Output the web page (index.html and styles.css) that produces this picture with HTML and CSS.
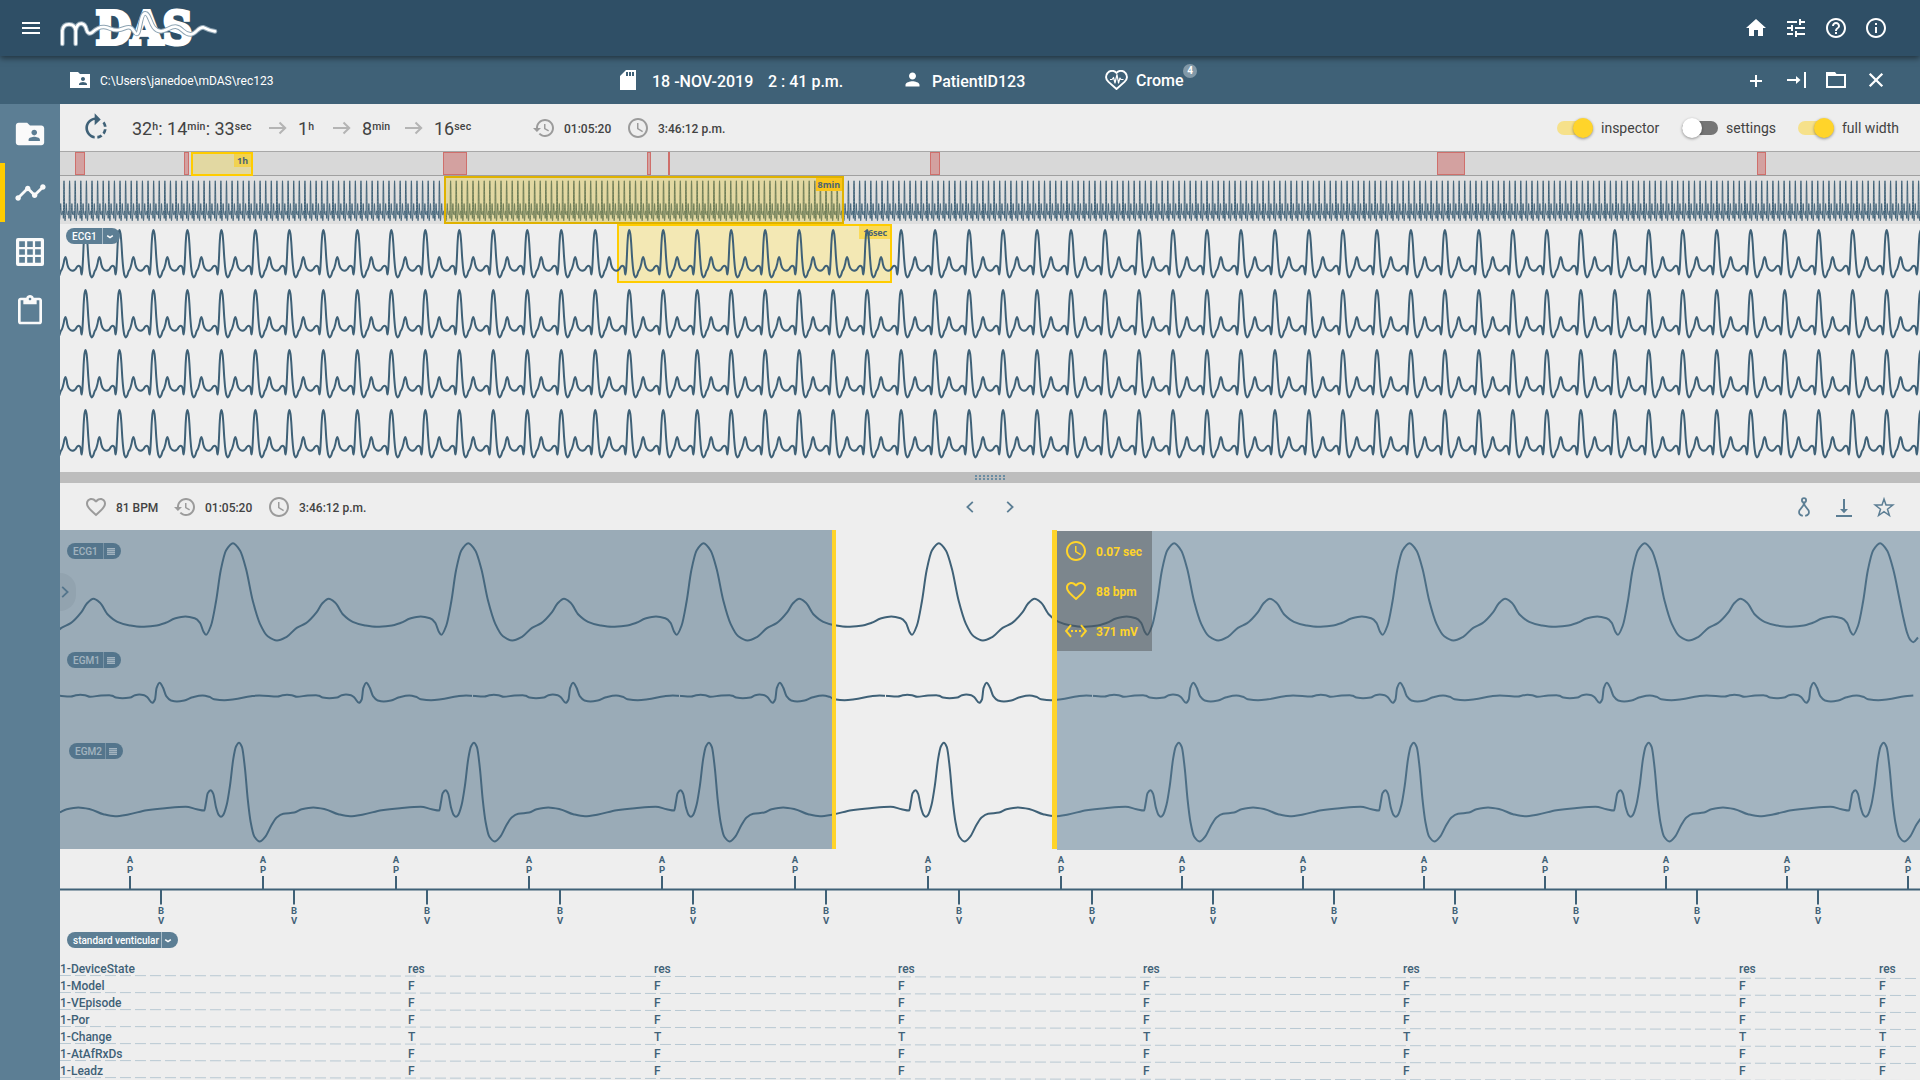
FILE: index.html
```html
<!DOCTYPE html>
<html lang="en">
<head>
<meta charset="utf-8">
<title>mDAS</title>
<link rel="stylesheet" href="styles.css">
</head>
<body>
<svg class="defs" width="0" height="0" aria-hidden="true">
  <symbol id="history" viewBox="0 0 24 24"><path d="M13 3c-4.97 0-9 4.03-9 9H1l3.89 3.89.07.14L9 12H6c0-3.87 3.13-7 7-7s7 3.13 7 7-3.13 7-7 7c-1.93 0-3.68-.79-4.94-2.06l-1.42 1.42C8.27 19.99 10.51 21 13 21c4.97 0 9-4.03 9-9s-4.03-9-9-9zm-1 5v5l4.28 2.54.72-1.21-3.5-2.08V8H12z"/></symbol>
  <symbol id="clock" viewBox="0 0 24 24"><path d="M11.99 2C6.47 2 2 6.48 2 12s4.47 10 9.99 10C17.52 22 22 17.52 22 12S17.52 2 11.99 2zM12 20c-4.42 0-8-3.58-8-8s3.58-8 8-8 8 3.58 8 8-3.58 8-8 8zm.5-13H11v6l5.25 3.15.75-1.23-4.5-2.67z"/></symbol>
  <symbol id="heart" viewBox="0 0 24 24"><path d="M16.5 3c-1.74 0-3.41.81-4.5 2.09C10.91 3.81 9.24 3 7.5 3 4.42 3 2 5.42 2 8.5c0 3.78 3.4 6.86 8.55 11.54L12 21.35l1.45-1.32C18.6 15.36 22 12.28 22 8.5 22 5.42 19.58 3 16.5 3zm-4.4 15.55l-.1.1-.1-.1C7.14 14.24 4 11.39 4 8.5 4 6.5 5.5 5 7.5 5c1.54 0 3.04.99 3.57 2.36h1.87C13.46 5.99 14.96 5 16.5 5c2 0 3.5 1.5 3.5 3.5 0 2.89-3.14 5.74-7.9 10.05z"/></symbol>
  <symbol id="arrow" viewBox="0 0 18 14"><path d="M0 7h16M10.5 1.5L16.2 7l-5.7 5.5" fill="none" stroke="currentColor" stroke-width="2"/></symbol>
  <symbol id="list" viewBox="0 0 8 7"><path d="M0 .8h8M0 2.6h8M0 4.4h8M0 6.2h8" stroke="currentColor" stroke-width="1.4"/></symbol>
  <symbol id="caret" viewBox="0 0 8 6"><path d="M1.2 1.6L4 3.6l2.8-2" fill="none" stroke="currentColor" stroke-width="1.5"/></symbol>
</svg>

<header class="topbar">
  <svg class="ico menu" viewBox="0 0 24 24"><path d="M3 18h18v-2H3v2zm0-5h18v-2H3v2zm0-7v2h18V6H3z"/></svg>
  <svg class="logo" viewBox="0 0 510 168">
    <text class="logo-word" x="122" y="132" textLength="290" lengthAdjust="spacingAndGlyphs">DAS</text>
    <path class="logo-line" d="M22 132V92Q24 73 42 73T62 92V132M62 92Q66 70 80 71Q91 73 94 88Q99 106 112 97Q130 80 147 81C166 83 170 92 190 90C208 88 218 76 229 84C238 92 240 102 245 102C256 102 255 39 271 40C288 41 284 92 318 94C338 92 345 79 362 80C384 82 384 104 408 103C424 101 430 80 445 82Q462 91 480 94"/>
    <path class="logo-core" d="M22 132V92Q24 73 42 73T62 92V132M62 92Q66 70 80 71Q91 73 94 88Q99 106 112 97Q130 80 147 81C166 83 170 92 190 90C208 88 218 76 229 84C238 92 240 102 245 102C256 102 255 39 271 40C288 41 284 92 318 94C338 92 345 79 362 80C384 82 384 104 408 103C424 101 430 80 445 82Q462 91 480 94"/>
  </svg>
  <nav class="actions">
    <svg class="ico" viewBox="0 0 24 24"><path d="M10 20v-6h4v6h5v-8h3L12 3 2 12h3v8z"/></svg>
    <svg class="ico" viewBox="0 0 24 24"><path d="M3 17v2h6v-2H3zM3 5v2h10V5H3zm10 16v-2h8v-2h-8v-2h-2v6h2zM7 9v2H3v2h4v2h2V9H7zm14 4v-2H11v2h10zm-6-4h2V7h4V5h-4V3h-2v6z"/></svg>
    <svg class="ico" viewBox="0 0 24 24"><path d="M11 18h2v-2h-2v2zm1-16C6.48 2 2 6.48 2 12s4.48 10 10 10 10-4.48 10-10S17.52 2 12 2zm0 18c-4.41 0-8-3.59-8-8s3.59-8 8-8 8 3.59 8 8-3.59 8-8 8zm0-14c-2.21 0-4 1.79-4 4h2c0-1.1.9-2 2-2s2 .9 2 2c0 2-3 1.75-3 5h2c0-2.25 3-2.5 3-5 0-2.21-1.79-4-4-4z"/></svg>
    <svg class="ico" viewBox="0 0 24 24"><path d="M11 17h2v-6h-2v6zm1-15C6.48 2 2 6.48 2 12s4.48 10 10 10 10-4.48 10-10S17.52 2 12 2zm0 18c-4.41 0-8-3.59-8-8s3.59-8 8-8 8 3.59 8 8-3.59 8-8 8zM11 9h2V7h-2v2z"/></svg>
  </nav>
</header>

<div class="subbar">
  <svg class="ico" viewBox="0 0 24 24"><path d="M22 6H12l-2-2H2v16h20V6zm-7 3c1.1 0 2 .9 2 2s-.9 2-2 2-2-.9-2-2 .9-2 2-2zm4 8h-8v-1c0-1.33 2.67-2 4-2s4 .67 4 2v1z"/></svg>
  <span class="path">C:\Users\janedoe\mDAS\rec123</span>
  <svg class="ico card" viewBox="0 0 24 24"><path d="M20 2H10L4 8v14h16V2zm-8 6h-2V4h2v4zm3 0h-2V4h2v4zm3 0h-2V4h2v4z"/></svg>
  <span class="meta date">18 -NOV-2019</span>
  <span class="meta time">2 : 41 p.m.</span>
  <svg class="ico person" viewBox="0 0 24 24"><path d="M12 12c2.21 0 4-1.79 4-4s-1.79-4-4-4-4 1.79-4 4 1.79 4 4 4zm0 2c-2.67 0-8 1.34-8 4v2h16v-2c0-2.66-5.33-4-8-4z"/></svg>
  <span class="meta patient">PatientID123</span>
  <svg class="pulse" viewBox="0 0 23 20"><path d="M11.5 19L3.2 11.600A6 6 0 0 1 2.600 3A5.600 5.600 0 0 1 11.500 3A5.600 5.600 0 0 1 20.400 3A6 6 0 0 1 19.800 11.600Z" stroke-width="1.900"/><path d="M5 9.500h2l1.500-2 1.500 5.500 2-8.500 1.500 8.500 1.500-5 1 1.500h2.500" stroke-width="1.200"/></svg>
  <span class="meta device">Crome<sup class="badge">4</sup></span>
  <nav class="actions">
    <svg class="ico" viewBox="0 0 24 24"><path d="M6 13h12M12 7v12" class="ln"/></svg>
    <svg class="ico" viewBox="0 0 24 24"><path d="M3 12h12M21 4v16" class="ln"/><path d="M12 8l4.500 4-4.500 4z"/></svg>
    <svg class="ico" viewBox="0 0 24 24"><path d="M2 4h9l1.500 2H22v14H2zM4 8v10h16V8z" fill-rule="evenodd"/></svg>
    <svg class="ico" viewBox="0 0 24 24"><path d="M5.700 5.700l12.600 12.600M18.300 5.700L5.700 18.300" class="ln thick"/></svg>
  </nav>
</div>

<div class="shell">
  <aside class="rail">
    <a class="rail-item"><svg class="ico r34" viewBox="0 0 24 24"><path d="M20 6h-8l-2-2H4c-1.100 0-1.990.9-1.990 2L2 18c0 1.100.9 2 2 2h16c1.100 0 2-.9 2-2V8c0-1.100-.9-2-2-2zm-5 3c1.100 0 2 .9 2 2s-.9 2-2 2-2-.9-2-2 .9-2 2-2zm4 8h-8v-1c0-1.330 2.670-2 4-2s4 .67 4 2v1z"/></svg></a>
    <a class="rail-item active"><svg class="ico r33" viewBox="0 0 24 24"><path d="M23 8c0 1.100-.9 2-2 2-.18 0-.35-.02-.51-.07l-3.560 3.550c.05.16.07.34.07.52 0 1.100-.9 2-2 2s-2-.9-2-2c0-.18.02-.36.07-.52l-2.550-2.550c-.16.05-.34.07-.52.07s-.36-.02-.52-.07l-4.550 4.560c.05.16.07.33.07.51 0 1.100-.9 2-2 2s-2-.9-2-2 .9-2 2-2c.18 0 .35.02.51.07l4.560-4.550C8.020 9.360 8 9.180 8 9c0-1.100.9-2 2-2s2 .9 2 2c0 .18-.02.36-.07.52l2.550 2.550c.16-.05.34-.07.52-.07s.36.02.52.07l3.550-3.560C19.020 8.350 19 8.180 19 8c0-1.100.9-2 2-2s2 .9 2 2z"/></svg></a>
    <a class="rail-item"><svg class="ico r28" viewBox="0 0 28 28"><path fill-rule="evenodd" d="M2 0h24a2 2 0 0 1 2 2v24a2 2 0 0 1-2 2H2a2 2 0 0 1-2-2V2a2 2 0 0 1 2-2zM3.200 3.200v5.700h5.700V3.200zM11.200 3.200v5.700h5.600V3.200zM19.100 3.200v5.700h5.700V3.200zM3.200 11.200v5.600h5.700v-5.600zM11.200 11.200v5.600h5.600v-5.600zM19.100 11.200v5.600h5.700v-5.600zM3.200 19.100v5.700h5.700v-5.700zM11.200 19.100v5.700h5.600v-5.700zM19.100 19.100v5.700h5.700v-5.700z"/></svg></a>
    <a class="rail-item"><svg class="ico r32" viewBox="0 0 24 24"><path d="M19 2h-4.180C14.400.84 13.300 0 12 0c-1.300 0-2.400.84-2.820 2H5c-1.100 0-2 .9-2 2v16c0 1.100.9 2 2 2h14c1.100 0 2-.9 2-2V4c0-1.100-.9-2-2-2zm-7 0c.55 0 1 .45 1 1s-.45 1-1 1-1-.45-1-1 .45-1 1-1zm7 18H5V4h2v3h10V4h2v16z"/></svg></a>
  </aside>

  <main class="content">
    <section class="toolbar range">
      <svg class="ico rotate" viewBox="0 0 24 24"><path d="M15.550 5.550L11 1v3.070C7.060 4.560 4 7.920 4 12s3.050 7.440 7 7.930v-2.020c-2.840-.48-5-2.940-5-5.910s2.160-5.430 5-5.910V10l4.550-4.450zM19.930 11c-.17-1.390-.72-2.730-1.620-3.890l-1.420 1.420c.54.75.88 1.600 1.020 2.470h2.020zM13 17.900v2.020c1.390-.17 2.740-.71 3.900-1.610l-1.440-1.440c-.75.54-1.590.89-2.460 1.030zm3.890-2.420l1.420 1.410c.9-1.160 1.450-2.500 1.620-3.890h-2.020c-.14.87-.48 1.720-1.020 2.480z"/></svg>
      <span class="span">32<sup>h</sup>: 14<sup>min</sup>: 33<sup>sec</sup></span>
      <svg class="arrow"><use href="#arrow"/></svg><span class="span">1<sup>h</sup></span>
      <svg class="arrow"><use href="#arrow"/></svg><span class="span">8<sup>min</sup></span>
      <svg class="arrow"><use href="#arrow"/></svg><span class="span">16<sup>sec</sup></span>
      <svg class="ico grey"><use href="#history"/></svg><span class="val">01:05:20</span>
      <svg class="ico grey"><use href="#clock"/></svg><span class="val">3:46:12 p.m.</span>
      <i class="toggle on"></i><span class="tlabel">inspector</span>
      <i class="toggle"></i><span class="tlabel">settings</span>
      <i class="toggle on"></i><span class="tlabel">full width</span>
    </section>

    <section class="overview">
      <i class="event" style="left:15px;width:10px"></i>
      <i class="event" style="left:124px;width:5px"></i>
      <i class="event" style="left:383px;width:24px"></i>
      <i class="event" style="left:587px;width:4px"></i>
      <i class="event" style="left:608px;width:2px"></i>
      <i class="event" style="left:870px;width:10px"></i>
      <i class="event" style="left:1377px;width:28px"></i>
      <i class="event" style="left:1697px;width:9px"></i>
      <div class="window hour"><b>1h</b></div>
    </section>

    <section class="strip">
      <svg class="plot" id="strip" width="1860" height="48"></svg>
      <div class="window minutes"><b>8min</b></div>
    </section>

    <section class="lines">
      <div class="window seconds"><b>16sec</b></div>
      <svg class="plot" id="lines" width="1860" height="248"></svg>
      <div class="pill lines-pill"><span>ECG1</span><svg class="caret"><use href="#caret"/></svg></div>
    </section>

    <div class="splitter"><i class="grip"></i></div>

    <section class="toolbar detail">
      <svg class="ico grey"><use href="#heart"/></svg><span class="val">81 BPM</span>
      <svg class="ico grey"><use href="#history"/></svg><span class="val">01:05:20</span>
      <svg class="ico grey"><use href="#clock"/></svg><span class="val">3:46:12 p.m.</span>
      <svg class="chev" viewBox="0 0 8 12"><path d="M6.800.8L1.400 6l5.400 5.200"/></svg>
      <svg class="chev" viewBox="0 0 8 12"><path d="M1.200.8L6.600 6l-5.400 5.200"/></svg>
      <svg class="ico tool" viewBox="0 0 24 24"><g fill="none" stroke="currentColor" stroke-width="1.800"><circle cx="12" cy="5.300" r="2.100"/><path d="M11.600 7.500V10L7.400 15.500Q6 19.800 10.800 20.800M12.400 7.500V10L16.600 15.500Q18 19.800 13.200 20.800"/></g></svg>
      <svg class="ico tool" viewBox="0 0 24 24"><path d="M4 20h16v2H4zM11 4h2v10h3l-4 4.200L8 14h3z"/></svg>
      <svg class="ico tool" viewBox="0 0 24 24"><path d="M12 4l2 6h6.800l-5.300 4.200 1.900 6.300L12 16.700l-5.400 3.800 1.900-6.300L3.200 10H10z" fill="none" stroke="currentColor" stroke-width="1.500"/></svg>
    </section>

    <section class="chart">
      <svg class="plot" id="chart" width="1860" height="320"></svg>
      <div class="pill p1"><span>ECG1</span><svg class="list"><use href="#list"/></svg></div>
      <div class="pill p2"><span>EGM1</span><svg class="list"><use href="#list"/></svg></div>
      <div class="pill p3"><span>EGM2</span><svg class="list"><use href="#list"/></svg></div>
      <div class="drawer"><svg class="chev" viewBox="0 0 8 12"><path d="M1.200.8L6.600 6l-5.400 5.200"/></svg></div>
      <div class="shade before"></div>
      <div class="shade after"></div>
      <i class="bar start"></i><i class="bar end"></i>
      <div class="readout">
        <svg class="ico"><use href="#clock"/></svg><span>0.07 sec</span>
        <svg class="ico"><use href="#heart"/></svg><span>88 bpm</span>
        <svg class="ico" viewBox="0 0 24 24"><path d="M7.770 6.760L6.230 5.480.82 12l5.410 6.520 1.540-1.280L3.420 12l4.350-5.240zM7 13h2v-2H7v2zm10-2h-2v2h2v-2zm-6 2h2v-2h-2v2zm6.770-7.520l-1.540 1.280L20.580 12l-4.350 5.240 1.540 1.280L23.180 12l-5.410-6.520z"/></svg><span>371 mV</span>
      </div>
    </section>

    <svg class="markers" id="markers" width="1860" height="82"></svg>

    <div class="group"><div class="pill wide"><span>standard venticular</span><svg class="caret"><use href="#caret"/></svg></div></div>

    <section class="table" id="table"></section>
  </main>
</div>
<script src="app.js"></script>
</body>
</html>
```
FILE: styles.css
```css
* { box-sizing: border-box; }
body {
  margin: 0;
  width: 1920px;
  height: 1080px;
  overflow: hidden;
  background: #eee;
  color: #424242;
  font-family: Roboto, "Liberation Sans", sans-serif;
  font-size: 12px;
}
.defs { display: none; }
svg { display: block; flex: none; }
.ico { width: 24px; height: 24px; fill: currentColor; }
.ln { fill: none; stroke: currentColor; stroke-width: 2; }
.thick { stroke-width: 2.3; }

.topbar {
  position: relative;
  z-index: 2;
  display: flex;
  align-items: center;
  height: 56px;
  padding: 0 32px 0 19px;
  background: #2f4f66;
  color: #fff;
  box-shadow: 0 2px 6px rgba(0, 0, 0, .5);
}
.logo { width: 170px; height: 56px; margin-left: 12px; }
.logo-word {
  font: bold 132px "DejaVu Serif", serif;
  fill: #fff;
  stroke: #fff;
  stroke-width: 12;
}
.logo-line, .logo-core { fill: none; stroke-linecap: round; stroke-linejoin: round; }
.logo-line { stroke: #8ea4b3; stroke-width: 14; }
.logo-core { stroke: #fff; stroke-width: 8; }
.actions { display: flex; gap: 16px; margin-left: auto; }

.subbar {
  display: flex;
  align-items: center;
  height: 48px;
  padding: 0 32px 0 68px;
  background: #3f6177;
  color: #fff;
}
.path { width: 516px; padding: 1px 0 0 8px; }
.card { margin: 0 12px 0 8px; }
.meta { padding-top: 2px; font-size: 16px; font-weight: 500; white-space: nowrap; }
.date { width: 116px; }
.time { width: 134px; }
.subbar .person { width: 21px; height: 21px; margin: 0 9px 2px 0; }
.patient { width: 173px; }
.pulse { width: 23px; height: 20px; margin-right: 8px; fill: none; stroke: #fff; stroke-linejoin: round; }
.device { position: relative; padding: 0; }
.badge {
  position: absolute;
  left: 47px;
  top: -7px;
  width: 14px;
  height: 14px;
  border-radius: 7px;
  background: #8299a8;
  font-size: 10px;
  font-weight: 700;
  line-height: 14px;
  text-align: center;
}

.shell { display: flex; height: 976px; }
.rail { width: 60px; flex: none; background: #5c7e94; color: #fafafa; }
.rail-item { display: flex; align-items: center; justify-content: center; height: 59px; }
.active { border-left: 5px solid #fc0; padding-right: 5px; }
.r34 { width: 34px; height: 34px; }
.r33 { width: 33px; height: 33px; }
.r28 { width: 28px; height: 28px; }
.r32 { width: 32px; height: 32px; }
.content { width: 1860px; flex: none; overflow: hidden; }

.toolbar { display: grid; align-items: center; height: 47px; padding-top: 1px; }
.range {
  grid-template-columns: 52px 137px 29px 35px 29px 43px 29px 98px 32px 62px 32px 899px 44px 81px 44px 72px 44px 60px;
  padding-left: 20px;
}
.rotate { width: 32px; height: 32px; color: #3f6177; }
.span { font-size: 18px; line-height: 22px; padding-top: 1px; white-space: nowrap; }
.span sup { font-size: 10.500px; font-weight: 500; letter-spacing: .2px; line-height: 0; vertical-align: 5px; }
.arrow { width: 18px; height: 14px; color: #b4b4b4; }
.grey { color: #9b9b9b; }
.val { padding-top: 1px; font-weight: 500; white-space: nowrap; }
.tlabel { font-size: 14px; white-space: nowrap; }
.toggle { position: relative; width: 36px; height: 14px; border-radius: 7px; background: #757575; }
.toggle::after {
  content: "";
  position: absolute;
  left: 0;
  top: -3px;
  width: 20px;
  height: 20px;
  border-radius: 50%;
  background: #fff;
  box-shadow: 0 1px 3px rgba(0, 0, 0, .4);
}
.on { background: #f6e18b; }
.on::after { left: 16px; background: #ffd42a; }

.overview {
  position: relative;
  height: 25px;
  border-top: 1px solid #a8a8a8;
  border-bottom: 1px solid #a0a0a0;
  background: #d8d8d8;
}
.event { position: absolute; top: 0; height: 23px; border: 1px solid #cf6f6b; background: #d3a1a0; }
.window { position: absolute; border: 2px solid #fc0; }
.window b {
  position: absolute;
  right: 0;
  top: 0;
  padding: 0 3px;
  height: 13px;
  font: 700 9px/13px "Noto Sans", sans-serif;
  color: #4a6375;
  background: rgba(255, 204, 0, .5);
}
.hour { left: 131px; top: 0; width: 62px; height: 24px; background: #e2d8a2; }
.strip { position: relative; height: 48px; background: #dfdfdf; }
.minutes { left: 384px; top: 0; width: 400px; height: 48px; border-color: #dfb200; background: rgba(235, 200, 0, .27); }
.minutes b { padding: 0 2px; background: #fac41a; }
.lines { position: relative; height: 248px; }
.seconds { left: 557px; top: 0; width: 275px; height: 59px; background: #f3e8b4; }
.seconds b { padding: 0 3px 0 4px; letter-spacing: -.2px; }
.plot { position: absolute; left: 0; top: 0; }
.wave { fill: none; stroke: #3f6177; stroke-linejoin: round; }

.pill {
  position: absolute;
  display: flex;
  align-items: center;
  justify-content: space-between;
  width: 54px;
  height: 16px;
  padding: 1px 6px 0;
  border-radius: 8px;
  background: linear-gradient(#a9bcc8, #a9bcc8) 36px 0 / 1px 16px no-repeat #5c7e94;
  color: #fff;
  font-size: 10px;
  font-weight: 500;
  white-space: nowrap;
}
.lines-pill { left: 6px; top: 4px; }
.caret { width: 8px; height: 6px; }
.list { width: 8px; height: 7px; }

.splitter {
  display: flex;
  align-items: center;
  justify-content: center;
  height: 11px;
  background: #bdbdbd;
}
.grip {
  width: 30px;
  height: 6px;
  background: repeating-linear-gradient(#bdbdbd00 0 2px, #bdbdbd 2px 3px), repeating-linear-gradient(90deg, #6a8da3 0 2px, #bdbdbd 2px 4px);
}
.detail { grid-template-columns: 32px 57px 32px 62px 32px 667px 40px 786px 40px 40px 24px; padding-left: 24px; }
.chev { width: 8px; height: 12px; fill: none; stroke: #5c7e94; stroke-width: 1.800; }
.tool { color: #5c7e94; }

.chart { position: relative; height: 320px; }
.p1 { left: 7px; top: 13px; }
.p2 { left: 7px; top: 122px; }
.p3 { left: 9px; top: 213px; }
.drawer {
  position: absolute;
  left: 0;
  top: 43px;
  width: 16px;
  height: 38px;
  padding: 13px 0 0 1px;
  border-radius: 0 19px 19px 0;
  background: #ddd;
}
.shade { position: absolute; }
.before { left: 0; top: 0; width: 772px; height: 319px; background: rgba(76, 109, 132, .52); }
.after { left: 997px; top: 1px; width: 863px; height: 319px; background: rgba(91, 124, 148, .51); }
.bar { position: absolute; top: 0; height: 319px; background: #ffd42a; }
.start { left: 772px; width: 4px; }
.end { left: 992px; width: 5px; }
.readout {
  position: absolute;
  left: 997px;
  top: 1px;
  width: 95px;
  height: 120px;
  display: grid;
  grid-template-columns: 32px auto;
  grid-auto-rows: 40px;
  align-items: center;
  padding-left: 7px;
  background: rgba(66, 66, 66, .4);
  color: #ffd42a;
  font-weight: 700;
}
.readout span { padding-top: 1px; }

.markers text { font: 700 9.500px Roboto, sans-serif; fill: #3f6177; text-anchor: middle; }
.tick { stroke: #3f6177; stroke-width: 2; }
.group { position: relative; height: 27px; }
.wide { left: 7px; top: 0; width: 111px; background-position: 94px 0; }

.row {
  position: relative;
  display: grid;
  grid-template-columns: 348px 246px 244px 245px 260px 336px 140px 41px;
  height: 17px;
  line-height: 21px;
  font-weight: 500;
  color: #3f6177;
}
.row svg { position: absolute; left: 0; top: 0; }
.row line { stroke: #b9c9d3; stroke-width: 1; stroke-dasharray: 11 4; }
```
FILE: app.js
```js
const NS = 'http://www.w3.org/2000/svg';

// One beat of each signal, as page coordinates of the detail chart.
const ECG = [[206,634.3],[211,625],[216,601],[220.7,570],[226,550],[233,542.7],[240,550],[246,568.3],[252.7,600],[260,623.3],[267.7,635.7],[277,640],[286.7,636.3],[296.7,627.3],[306,622.7],[316.7,611.7],[322,603.3],[328.7,598.3],[335.3,602.3],[343.3,614.3],[352.7,621.3],[365,625],[376.7,626.3],[390,625.3],[401,622.3],[410,618],[420.7,616],[430,617.7],[435.3,622.3],[438.7,631]];
const EGM1 = [[213,698.7],[223.3,699.7],[233.3,698.8],[250,695.7],[258.3,695],[276.7,696],[280.7,695],[286,694.3],[290.7,694.7],[296,696.3],[306.7,695],[315,694.7],[318,695.3],[321.7,697],[328.3,697.7],[336,697],[340.7,694.7],[345,694],[350,694.7],[353.3,697],[358,702.3],[360.7,699],[362.3,687.7],[365.3,682.3],[368.7,687],[372,695.7],[376.7,700],[382.7,701],[390,700],[398.3,696.7],[408.3,695],[415,696.3]];
const EGM2 = [[204.3,810],[206,801.7],[207.7,792.7],[210.7,789.7],[213.3,793.3],[216,806.7],[218.7,814.3],[221,816.3],[223.3,814.3],[226.7,804.3],[230,785],[233.3,758.3],[236,746],[239,742.3],[242,746.7],[245,768.3],[247.7,798.3],[250.7,821.7],[254.3,836],[259.7,841],[265,836.7],[271.7,824.3],[276.7,817],[283.3,813.3],[294.3,812],[301.7,808.7],[313.3,807],[325,808.7],[338.3,813.7],[350,815.7],[363.3,814],[381.7,809.7],[400,807.7],[420.7,806.3],[431.7,808.7]];

function repeat(beat, period, from, to) {
  const pts = [];
  for (let k = from; k <= to; k++) beat.forEach(([x, y]) => pts.push([x + k * period, y]));
  return pts;
}

// Monotone cubic interpolation, so peaks never overshoot.
function smooth(p) {
  const n = p.length, d = [], m = [];
  for (let i = 0; i < n - 1; i++) d[i] = (p[i + 1][1] - p[i][1]) / (p[i + 1][0] - p[i][0]);
  m[0] = d[0];
  m[n - 1] = d[n - 2];
  for (let i = 1; i < n - 1; i++) m[i] = d[i - 1] * d[i] <= 0 ? 0 : 2 * d[i - 1] * d[i] / (d[i - 1] + d[i]);
  let s = 'M' + p[0][0].toFixed(2) + ' ' + p[0][1].toFixed(2);
  for (let i = 0; i < n - 1; i++) {
    const h = (p[i + 1][0] - p[i][0]) / 3;
    s += 'C' + [p[i][0] + h, p[i][1] + m[i] * h, p[i + 1][0] - h, p[i + 1][1] - m[i + 1] * h, p[i + 1][0], p[i + 1][1]].map(v => v.toFixed(2)).join(' ');
  }
  return s;
}

function add(parent, tag, attrs, text) {
  const e = document.createElementNS(NS, tag);
  for (const k in attrs) e.setAttribute(k, attrs[k]);
  if (text) e.textContent = text;
  parent.appendChild(e);
  return e;
}
const wave = (svg, pts, w) => add(svg, 'path', { class: 'wave', d: smooth(pts), 'stroke-width': w });
const scaled = (period, x0, y0, ky, from, to) =>
  repeat(ECG.map(([x, y]) => [(x - 233) * period / 235.2 + x0, (y - 542.7) * ky + y0]), period, from, to);

wave(document.getElementById('strip'), scaled(5.603, 4, 4.8, .41, -1, 332), 1);
for (let r = 0; r < 4; r++)
  wave(document.getElementById('lines'), scaled(33.985, 25.5, 6 + r * 60, .487, -1, 54), 2);

const chart = document.getElementById('chart');
const at = (pts, dx = 0) => pts.map(([x, y]) => [x - 60 + dx, y - 529.5]);
const ecg = repeat(ECG, 235.3, -1, 7).filter(p => p[0] < 1901);
ecg.push([1903.3, 617], [1907, 632], [1910, 639], [1913.3, 641.7], [1918, 637]);
wave(chart, at(ecg), 2);
wave(chart, at(repeat(EGM1, 206.75, -1, 8).filter(p => p[0] < 1926), 1), 2);
wave(chart, at(repeat(EGM2, 234.95, -1, 7).filter(p => p[0] > 58 && p[0] < 1922)), 2);
[472, 679, 885, 1092].forEach(x => add(chart, 'rect', { x: x - 60, y: 163, width: 1, height: 5, fill: '#eee' }));

const markers = document.getElementById('markers');
add(markers, 'line', { x1: 0, x2: 1860, y1: 39.5, y2: 39.5, class: 'tick' });
const ticks = [130, 263, 396, 529, 662, 795, 928, 1061, 1182, 1303, 1424, 1545, 1666, 1787, 1908];
ticks.forEach(t => {
  const a = t - 60, b = a + 31;
  add(markers, 'line', { x1: a, x2: a, y1: 26, y2: 39, class: 'tick' });
  add(markers, 'text', { x: a, y: 13.3 }, 'A');
  add(markers, 'text', { x: a, y: 23.3 }, 'P');
  if (b > 1860) return;
  add(markers, 'line', { x1: b, x2: b, y1: 40, y2: 54.500, class: 'tick' });
  add(markers, 'text', { x: b, y: 64.3 }, 'B');
  add(markers, 'text', { x: b, y: 74.3 }, 'V');
});

const table = document.getElementById('table');
[['DeviceState', 'res'], ['Model', 'F'], ['VEpisode', 'F'], ['Por', 'F'], ['Change', 'T'], ['AtAfRxDs', 'F'], ['Leadz', 'F']].forEach(([name, v]) => {
  const row = document.createElement('div');
  row.className = 'row';
  const svg = add(row, 'svg', { width: 1860, height: 22 });
  add(svg, 'line', { x1: 0, y1: 16.5, x2: 1860, y2: 19.5 });
  ['1-' + name].concat(Array(7).fill(v)).forEach(t => {
    const s = document.createElement('span');
    s.textContent = t;
    row.appendChild(s);
  });
  table.appendChild(row);
});
```
